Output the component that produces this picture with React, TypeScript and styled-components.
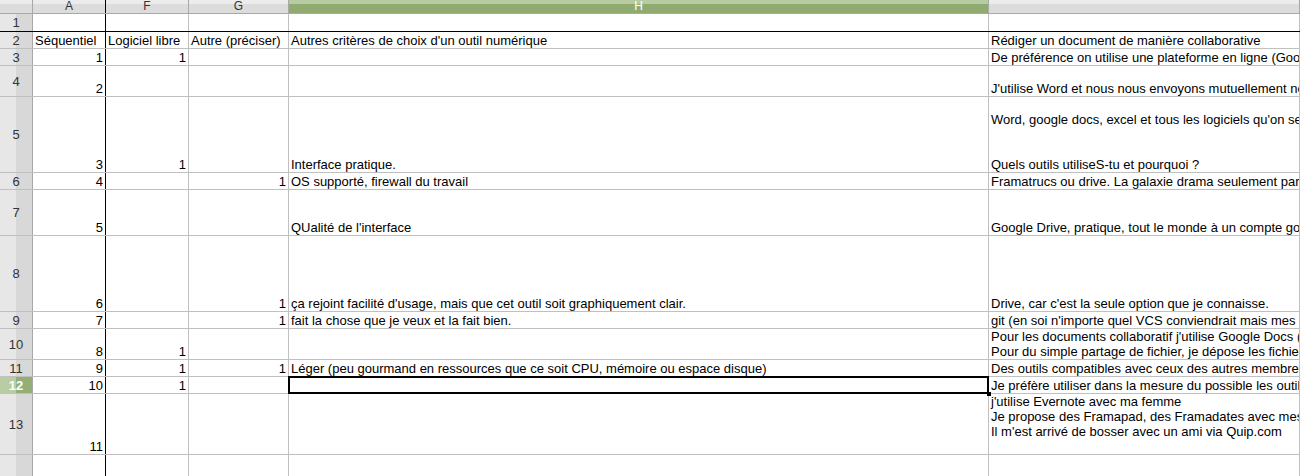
import React from 'react';
import styled, { createGlobalStyle, css } from 'styled-components';

const GlobalStyle = createGlobalStyle`
  html, body {
    margin: 0;
    padding: 0;
    background: #ffffff;
    overflow: hidden;
  }
  body {
    font-family: 'Liberation Sans', Arial, sans-serif;
  }
`;

const GRID = '#c0c0c0';
const HEAD_LINE = '#a8a8a8';

// widths include the right border of each column
const COLUMNS = [
  { label: 'A', width: 73, frozen: true },
  { label: 'F', width: 83 },
  { label: 'G', width: 100 },
  { label: 'H', width: 700, active: true },
  { label: '', width: 0 },
];

type RowData = {
  n: number;
  height: number;
  frozen?: boolean;
  active?: boolean;
  cells: (string | number)[];
};

const ROWS: RowData[] = [
  { n: 1, height: 18, frozen: true, cells: ['', '', '', '', ''] },
  {
    n: 2,
    height: 17,
    cells: ['Séquentiel', 'Logiciel libre', 'Autre (préciser)', "Autres critères de choix d'un outil numérique", 'Rédiger un document de manière collaborative'],
  },
  { n: 3, height: 17, cells: [1, 1, '', '', 'De préférence on utilise une plateforme en ligne (Google Docs, Framapad)'] },
  { n: 4, height: 31, cells: [2, '', '', '', "J'utilise Word et nous nous envoyons mutuellement nos fichiers par mail"] },
  {
    n: 5,
    height: 76,
    cells: [3, 1, '', 'Interface pratique.', "\nWord, google docs, excel et tous les logiciels qu'on se partage\n\n\nQuels outils utiliseS-tu et pourquoi ?"],
  },
  { n: 6, height: 17, cells: [4, '', 1, 'OS supporté, firewall du travail', 'Framatrucs ou drive. La galaxie drama seulement parce que'] },
  { n: 7, height: 46, cells: [5, '', '', "QUalité de l'interface", 'Google Drive, pratique, tout le monde à un compte google'] },
  {
    n: 8,
    height: 76,
    cells: [6, '', 1, "ça rejoint facilité d'usage, mais que cet outil soit graphiquement clair.", "Drive, car c'est la seule option que je connaisse."],
  },
  { n: 9, height: 17, cells: [7, '', 1, 'fait la chose que je veux et la fait bien.', "git (en soi n'importe quel VCS conviendrait mais mes collègues"] },
  {
    n: 10,
    height: 31,
    cells: [8, 1, '', '', "Pour les documents collaboratif j'utilise Google Docs (et Framapad)\nPour du simple partage de fichier, je dépose les fichiers sur Dropbox"],
  },
  {
    n: 11,
    height: 17,
    cells: [9, 1, 1, 'Léger (peu gourmand en ressources que ce soit CPU, mémoire ou espace disque)', 'Des outils compatibles avec ceux des autres membres'],
  },
  { n: 12, height: 17, active: true, cells: [10, 1, '', '', 'Je préfère utiliser dans la mesure du possible les outils libres'] },
  {
    n: 13,
    height: 61,
    cells: [11, '', '', '', "j'utilise Evernote avec ma femme\nJe propose des Framapad, des Framadates avec mes amis\nIl m'est arrivé de bosser avec un ami via Quip.com\n"],
  },
  { n: 14, height: 90, cells: ['', '', '', '', ''] },
];

const Sheet = styled.div`
  display: flex;
  flex-direction: column;
  width: 1300px;
  height: 476px;
  overflow: hidden;
  color: #000000;
`;

const HeaderRow = styled.div`
  display: flex;
  flex: 0 0 14px;
  height: 14px;
  box-sizing: border-box;
  border-bottom: 1px solid ${HEAD_LINE};
`;

const headBackground = (active?: boolean) =>
  active
    ? css`
        background: linear-gradient(to bottom, #b6cba1 0, #b6cba1 4px, #8fab70 4px, #8fab70 100%);
        color: #ffffff;
      `
    : css`
        background: linear-gradient(to bottom, #ececec 0, #ececec 4px, #dcdcdc 4px, #dcdcdc 100%);
        color: #333333;
      `;

const Corner = styled.div`
  flex: 0 0 33px;
  box-sizing: border-box;
  border-right: 1px solid ${HEAD_LINE};
  ${headBackground(false)}
`;

const ColHead = styled.div<{ $width: number; $active?: boolean; $frozen?: boolean }>`
  flex: ${({ $width }) => ($width ? `0 0 ${$width}px` : '1 1 auto')};
  box-sizing: border-box;
  border-right: 1px solid ${({ $frozen }) => ($frozen ? '#000000' : HEAD_LINE)};
  font-size: 12px;
  line-height: 12px;
  text-align: center;
  overflow: hidden;
  ${({ $active }) => headBackground($active)}
`;

const Row = styled.div<{ $height: number; $frozen?: boolean }>`
  display: flex;
  flex: 0 0 ${({ $height }) => $height}px;
  height: ${({ $height }) => $height}px;
  box-sizing: border-box;
  border-bottom: 1px solid ${({ $frozen }) => ($frozen ? '#000000' : GRID)};
`;

const RowHead = styled.div<{ $active?: boolean }>`
  flex: 0 0 33px;
  display: flex;
  align-items: center;
  justify-content: center;
  box-sizing: border-box;
  border-right: 1px solid ${HEAD_LINE};
  font-size: 13px;
  ${({ $active }) =>
    $active
      ? css`
          background: linear-gradient(to right, #b8cda3 0, #b8cda3 16px, #93ae76 16px, #93ae76 100%);
          color: #ffffff;
          font-weight: bold;
        `
      : css`
          background: linear-gradient(to right, #e7e7e7 0, #e7e7e7 16px, #d8d8d8 16px, #d8d8d8 100%);
          color: #333333;
        `}
`;

const Cell = styled.div<{ $width: number; $numeric?: boolean; $frozen?: boolean; $selected?: boolean }>`
  flex: ${({ $width }) => ($width ? `0 0 ${$width}px` : '1 1 auto')};
  position: relative;
  display: flex;
  flex-direction: column;
  justify-content: flex-end;
  align-items: ${({ $numeric }) => ($numeric ? 'flex-end' : 'flex-start')};
  box-sizing: border-box;
  padding: 0 2px 0 2px;
  border-right: 1px solid ${({ $frozen }) => ($frozen ? '#000000' : GRID)};
  font-size: 13px;
  line-height: 15px;
  overflow: ${({ $selected }) => ($selected ? 'visible' : 'hidden')};
  ${({ $selected }) =>
    $selected &&
    css`
      z-index: 2;
      &::after {
        content: '';
        position: absolute;
        left: -1px;
        top: -1px;
        right: -1px;
        bottom: -1px;
        border: 2px solid #000000;
      }
      &::before {
        content: '';
        position: absolute;
        right: -3px;
        bottom: -3px;
        width: 4px;
        height: 4px;
        background: #000000;
        z-index: 3;
      }
    `}
`;

const Line = styled.span`
  display: block;
  min-height: 15px;
  white-space: pre;
`;

export default function App() {
  return (
    <>
      <GlobalStyle />
      <Sheet>
        <HeaderRow>
          <Corner />
          {COLUMNS.map((col, i) => (
            <ColHead key={i} $width={col.width} $active={col.active} $frozen={col.frozen}>
              {col.label}
            </ColHead>
          ))}
        </HeaderRow>
        {ROWS.map((row) => (
          <Row key={row.n} $height={row.height} $frozen={row.frozen}>
            <RowHead $active={row.active}>{row.n}</RowHead>
            {row.cells.map((value, i) => (
              <Cell
                key={i}
                $width={COLUMNS[i].width}
                $frozen={COLUMNS[i].frozen}
                $numeric={typeof value === 'number'}
                $selected={row.active && COLUMNS[i].active}
              >
                {value !== '' &&
                  String(value)
                    .split('\n')
                    .map((line, j) => <Line key={j}>{line}</Line>)}
              </Cell>
            ))}
          </Row>
        ))}
      </Sheet>
    </>
  );
}
